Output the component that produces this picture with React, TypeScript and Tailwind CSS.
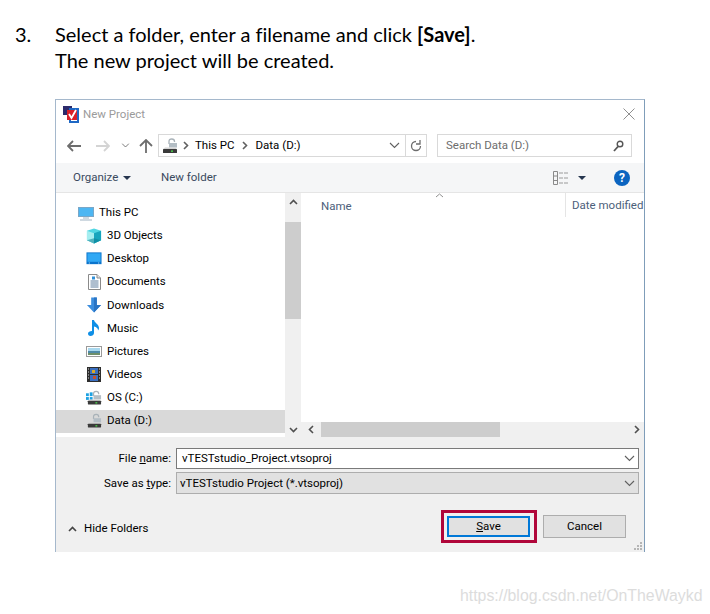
import type { ReactNode } from 'react';

const uiFont = "font-['Roboto',sans-serif]";

function Chevron({ dir, color = '#606060', className = '' }: { dir: 'up' | 'down' | 'left' | 'right'; color?: string; className?: string }) {
  const points = {
    up: '1,6 4.5,2.5 8,6',
    down: '1,3 4.5,6.5 8,3',
    left: '6,1 2.5,4.5 6,8',
    right: '3,1 6.5,4.5 3,8',
  }[dir];
  return (
    <svg width="9" height="9" viewBox="0 0 9 9" className={className}>
      <polyline points={points} fill="none" stroke={color} strokeWidth="1.6" />
    </svg>
  );
}

function ThinDown({ className = '' }: { className?: string }) {
  return (
    <svg width="11" height="7" viewBox="0 0 11 7" className={className}>
      <polyline points="1,1 5.5,5.5 10,1" fill="none" stroke="#606060" strokeWidth="1.1" />
    </svg>
  );
}

function DriveIcon({ windows = false }: { windows?: boolean }) {
  return (
    <svg width="17" height="16" viewBox="0 0 17 16">
      {windows && (
        <g fill="#1ba1e2">
          <rect x="0" y="3" width="3" height="3" />
          <rect x="4" y="2" width="3" height="4" />
          <rect x="0" y="7" width="3" height="3" />
          <rect x="4" y="7" width="3" height="3" />
        </g>
      )}
      <path d="M8 6V3.500C8 1.800 9.300 1 10.800 1S13.500 1.800 13.500 3.500V4" fill="none" stroke="#a9b2b8" strokeWidth="1.300" />
      <rect x="8" y="5" width="8" height="4.500" fill="#b4bec5" />
      <path d="M4 9.500h10l2 1.500H2z" fill="#d5d5d5" />
      <rect x="2" y="11" width="14" height="4" rx=".5" fill="#3a3a3a" />
      <rect x="10" y="12.500" width="2" height="1.300" fill="#4ce04c" />
    </svg>
  );
}

const navIcons: Record<string, ReactNode> = {
  '3D Objects': (
    <svg width="17" height="16" viewBox="0 0 17 16">
      <path d="M8.500 0L16 2.500v10L8.500 16 1 12.500v-10z" fill="#4fd6e2" />
      <path d="M1 2.500L8.500 5v11L1 12.500z" fill="#a5eef0" />
      <path d="M8.500 5L16 2.500v10L8.500 16z" fill="#17a5bd" />
      <path d="M8.500 10.500l7.500 2L8.500 16 1 12.500z" fill="#0b7f94" opacity=".55" />
    </svg>
  ),
  Desktop: (
    <svg width="17" height="13" viewBox="0 0 17 13">
      <rect x=".5" y="0" width="16" height="12.500" fill="#0a74cc" />
      <rect x="1.500" y="1" width="14" height="9" fill="#30a8f4" />
      <path d="M3 11.300h1M13 11.300h1" stroke="#d8effc" />
    </svg>
  ),
  Documents: (
    <svg width="13" height="16" viewBox="0 0 13 16">
      <path d="M.5.500h8.500l3.500 3.500v11.500H.5z" fill="#fff" stroke="#8a8a8a" />
      <path d="M9 .5V4h3.500" fill="#e5e5e5" stroke="#8a8a8a" />
      <path d="M2.500 7h8M2.500 9h8M2.500 11h8M2.500 13h8" stroke="#5f7f9f" strokeWidth="1" />
      <rect x="4" y="2.500" width="3" height="3" fill="#2f8fd8" />
    </svg>
  ),
  Downloads: (
    <svg width="17" height="16" viewBox="0 0 17 16">
      <path d="M5.500 0h6v8H16l-7.500 8L1 8h4.500z" fill="#3c8ede" />
      <path d="M8.500 0h3v8H16l-7.500 8z" fill="#2a74c4" />
    </svg>
  ),
  Music: (
    <svg width="12" height="16" viewBox="0 0 12 16">
      <path d="M4 0h2c.5 3 5 4 5 8 0 1-.5 2-1 2.500.2-2-1.500-3.500-4-4V13c0 2-1.800 3-3.500 3S0 15 0 13.500 1.800 11 4 11z" fill="#0f8fe6" />
    </svg>
  ),
  Pictures: (
    <svg width="16" height="11" viewBox="0 0 16 11">
      <rect x=".5" y=".5" width="15" height="10" fill="#fff" stroke="#9a9a9a" />
      <rect x="2" y="2" width="12" height="3" fill="#a9d8ee" />
      <rect x="2" y="5" width="12" height="2" fill="#4f8aa8" />
      <rect x="2" y="7" width="12" height="2" fill="#6f8f6a" />
    </svg>
  ),
  Videos: (
    <svg width="14" height="15" viewBox="0 0 14 15">
      <rect width="14" height="15" fill="#2d2d2d" />
      <rect x="3" y="1" width="8" height="6" fill="#3a6fc0" />
      <rect x="3" y="8" width="8" height="6" fill="#3a6fc0" />
      <rect x="5" y="3" width="3" height="3" fill="#d7a92a" />
      <rect x="6" y="9" width="3" height="3" fill="#c9502a" />
      <path d="M1 2h1M1 5h1M1 8h1M1 11h1M12 2h1M12 5h1M12 8h1M12 11h1" stroke="#ddd" />
    </svg>
  ),
  'OS (C:)': <DriveIcon windows />,
  'Data (D:)': <DriveIcon />,
};

const navItems = ['3D Objects', 'Desktop', 'Documents', 'Downloads', 'Music', 'Pictures', 'Videos', 'OS (C:)', 'Data (D:)'];

function NavRow({ label }: { label: string }) {
  const selected = label === 'Data (D:)';
  return (
    <div className={`flex h-[23.200px] items-center ${selected ? 'bg-[#d9d9d9]' : ''}`}>
      <span className="ml-[30px] mr-[5px] flex w-[16px] justify-center">{navIcons[label]}</span>
      <span className="text-[11.500px] text-black">{label}</span>
    </div>
  );
}

export default function App() {
  return (
    <div className="relative h-[614px] w-[710px] overflow-hidden bg-white">
      <div className="flex pl-[15px] pt-[21px] font-['Lato',sans-serif] text-[20px] leading-[26px] text-black [font-variant-ligatures:none]">
        <span className="w-[40px]">3.</span>
        <div>
          <div>
            Select a folder, enter a filename and click <b>[Save]</b>.
          </div>
          <div>The new project will be created.</div>
        </div>
      </div>

      <div className={`ml-[55px] mt-[26px] flex h-[453px] w-[590px] flex-col border-x border-t border-[#a5b8cc] border-r-[#7f9db9] ${uiFont}`}>
        {/* title bar */}
        <div className="flex h-[28px] shrink-0 items-center pl-[7px] pr-[8px]">
          <svg width="17" height="17" viewBox="0 0 17 17">
            <rect x="0" y="0" width="9" height="9" fill="#2c2a6b" />
            <rect x="6" y="2" width="10" height="15" fill="#1f68c4" />
            <rect x="8" y="4" width="6" height="11" fill="#fff" />
            <rect x="4" y="4" width="10" height="10" fill="#d8202a" />
            <polyline points="6,8 8.500,12 13,4" fill="none" stroke="#fff" strokeWidth="1.800" />
          </svg>
          <span className="ml-[3px] pt-[1px] text-[11.500px] text-[#9b9b9b]">New Project</span>
          <svg width="12" height="12" viewBox="0 0 12 12" className="ml-auto mr-[1px]">
            <path d="M.5.500l11 11M11.500.500l-11 11" stroke="#8f8f8f" strokeWidth="1" />
          </svg>
        </div>

        {/* nav row */}
        <div className="flex h-[35px] shrink-0 items-start pt-[6px]">
          <div className="ml-[11px] flex h-[23px] w-[91px] items-center">
            <svg width="14" height="12" viewBox="0 0 14 12">
              <path d="M6 1L1 6l5 5M1 6h13" fill="none" stroke="#6d6d6d" strokeWidth="1.800" />
            </svg>
            <svg width="14" height="12" viewBox="0 0 14 12" className="ml-[15px]">
              <path d="M8 1l5 5-5 5M13 6H0" fill="none" stroke="#d4d4d4" strokeWidth="1.800" />
            </svg>
            <ThinDown className="ml-[10px] scale-75" />
            <svg width="14" height="14" viewBox="0 0 14 14" className="ml-[8px]">
              <path d="M1 7l6-6 6 6M7 1v13" fill="none" stroke="#6d6d6d" strokeWidth="1.800" />
            </svg>
          </div>
          <div className="flex h-[23px] w-[269px] items-center border border-[#d9d9d9] bg-white">
            <span className="ml-[2px] flex">
              <DriveIcon />
            </span>
            <Chevron dir="right" className="ml-[3px]" />
            <span className="ml-[5px] text-[11.500px] text-black">This PC</span>
            <Chevron dir="right" className="ml-[5px]" />
            <span className="ml-[7px] text-[11.500px] text-black">Data (D:)</span>
            <ThinDown className="ml-auto mr-[5px]" />
            <div className="flex h-full w-[21px] items-center justify-center border-l border-[#d9d9d9]">
              <svg width="12" height="13" viewBox="0 0 12 13">
                <path d="M6 2.500a4.500 4.500 0 1 1-4.500 4.500M2 1v4h4" fill="none" stroke="#6d6d6d" strokeWidth="1.300" transform="matrix(-1 0 0 1 12 0)" />
              </svg>
            </div>
          </div>
          <div className="ml-[10px] flex h-[23px] w-[195px] items-center border border-[#d9d9d9] pl-[8px] pr-[7px]">
            <span className="text-[11.500px] text-[#6d6d6d]">Search Data (D:)</span>
            <svg width="11" height="12" viewBox="0 0 11 12" className="ml-auto">
              <circle cx="7" cy="4" r="2.800" fill="none" stroke="#555" strokeWidth="1.400" />
              <path d="M5 6.500L1 11" stroke="#555" strokeWidth="1.800" />
            </svg>
          </div>
        </div>

        {/* toolbar */}
        <div className="flex h-[30px] shrink-0 items-center border-b border-[#e5e5e5] bg-[#f5f6f7]">
          <span className="ml-[17px] w-[50px] text-[11.500px] text-[#3a4a5e]">Organize</span>
          <svg width="8" height="4" viewBox="0 0 8 4">
            <path d="M0 0h8L4 4z" fill="#26364f" />
          </svg>
          <span className="ml-[30px] text-[11.500px] text-[#3a4a5e]">New folder</span>
          <svg width="16" height="14" viewBox="0 0 16 14" className="ml-auto">
            <path d="M.5.500h4v13h-4zM.5 5h4M.5 9.500h4" fill="none" stroke="#8a8a8a" />
            <path d="M6 2h4M11 2h4M6 7h4M11 7h4M6 12h4M11 12h4" stroke="#9a9a9a" />
          </svg>
          <svg width="8" height="4" viewBox="0 0 8 4" className="ml-[9px]">
            <path d="M0 0h8L4 4z" fill="#26364f" />
          </svg>
          <span className="ml-[28px] mr-[14px] flex h-[16px] w-[16px] items-center justify-center rounded-full bg-[#0b64c0] text-[12px] font-bold leading-none text-white">?</span>
        </div>

        {/* browser body */}
        <div className="flex min-h-0 flex-1">
          <div className="flex w-[229px] shrink-0 flex-col">
            <div className="flex h-[31px] items-end">
              <span className="ml-[22px] flex w-[21px] justify-start pb-[3px]">
                <svg width="16" height="14" viewBox="0 0 16 14">
                  <rect x=".5" y=".5" width="15" height="9" fill="#4db6f2" stroke="#7aa7c7" />
                  <path d="M5 11h6M2 13h12" stroke="#9fb4c4" strokeWidth="1.200" />
                </svg>
              </span>
              <span className="pb-[3px] text-[11.500px] text-black">This PC</span>
            </div>
            <div className="mt-[0px]">
              {navItems.map((item) => (
                <NavRow key={item} label={item} />
              ))}
            </div>
          </div>
          <div className="flex w-[16px] shrink-0 flex-col items-center bg-[#f0f0f0]">
            <Chevron dir="up" color="#505050" className="mt-[5px]" />
            <div className="mt-[15px] h-[97px] w-full bg-[#cdcdcd]" />
            <Chevron dir="down" color="#505050" className="mt-auto mb-[3px]" />
          </div>
          <div className="flex min-w-0 flex-1 flex-col">
            <div className="relative flex h-[229px] shrink-0 items-start">
              <span className="ml-[20px] mt-[5px] text-[11.500px] text-[#4c607a]">Name</span>
              <svg width="9" height="5" viewBox="0 0 9 5" className="absolute left-[134px] top-0">
                <polyline points="1,4 4.500,1 8,4" fill="none" stroke="#909090" />
              </svg>
              <div className="ml-auto mr-0 flex h-[24px] w-[79px] items-center border-l border-[#e5e5e5] pl-[6px] pt-[1px] text-[11.500px] whitespace-nowrap text-[#4c607a]">Date modified</div>
            </div>
            <div className="flex h-[15px] items-center bg-[#f0f0f0]">
              <span className="flex w-[20px] justify-center">
                <Chevron dir="left" color="#505050" />
              </span>
              <div className="h-full w-[179px] bg-[#cdcdcd]" />
              <Chevron dir="right" color="#505050" className="ml-auto mr-[3px]" />
            </div>
          </div>
        </div>

        {/* footer */}
        <div className="flex h-[115px] shrink-0 flex-col bg-[#f0f0f0] pt-[11px]">
          <div className="flex h-[21px] items-center">
            <label className="w-[115px] pt-[1px] text-right text-[11.500px] text-black">
              File <u>n</u>ame:
            </label>
            <div className="ml-[5px] flex h-full w-[463px] items-center border border-[#7a7a7a] bg-white pl-[5px] pr-[3px]">
              <span className="pt-[1px] text-[11.500px] text-black">vTESTstudio_Project.vtsoproj</span>
              <ThinDown className="ml-auto" />
            </div>
          </div>
          <div className="mt-[3px] flex h-[22px] items-center">
            <label className="w-[115px] pt-[1px] text-right text-[11.500px] text-black">
              Save as <u>t</u>ype:
            </label>
            <div className="ml-[5px] flex h-full w-[463px] items-center border border-[#adadad] bg-[#e1e1e1] pl-[3px] pr-[3px]">
              <span className="pt-[1px] text-[11.500px] text-black">vTESTstudio Project (*.vtsoproj)</span>
              <ThinDown className="ml-auto" />
            </div>
          </div>
          <div className="mt-[21px] flex h-[23px] items-center pr-[18px]">
            <Chevron dir="up" color="#444" className="ml-[12px] mt-[5px]" />
            <span className="ml-[7px] mt-[5px] text-[11.500px] text-black">Hide Folders</span>
            <button className="ml-auto box-border h-[21px] w-[83px] border-2 border-[#0078d7] bg-[#e1e1e1] text-[11.500px] text-black">
              <u>S</u>ave
            </button>
            <button className="ml-[13px] h-[23px] w-[83px] border border-[#adadad] bg-[#e1e1e1] text-[11.500px] text-black">Cancel</button>
          </div>
          <svg width="10" height="10" viewBox="0 0 10 10" className="ml-auto mr-[1px] mt-[4px]" fill="#b5b5b5">
            <rect x="7" y="0" width="2" height="2" />
            <rect x="4" y="3" width="2" height="2" />
            <rect x="7" y="3" width="2" height="2" />
            <rect x="1" y="6" width="2" height="2" />
            <rect x="4" y="6" width="2" height="2" />
            <rect x="7" y="6" width="2" height="2" />
          </svg>
        </div>
      </div>

      {/* red callout round the save button */}
      <div className="absolute left-[441px] top-[510px] h-[33px] w-[96px] border-[3px] border-[#b0063a]" />

      {/* watermark */}
      <div className="absolute left-[460px] top-[586px] font-['Liberation_Sans',sans-serif] text-[15.850px] leading-[20px] whitespace-nowrap text-[#dcdcdc]">
        https://blog.csdn.net/OnTheWaykd
      </div>
    </div>
  );
}
